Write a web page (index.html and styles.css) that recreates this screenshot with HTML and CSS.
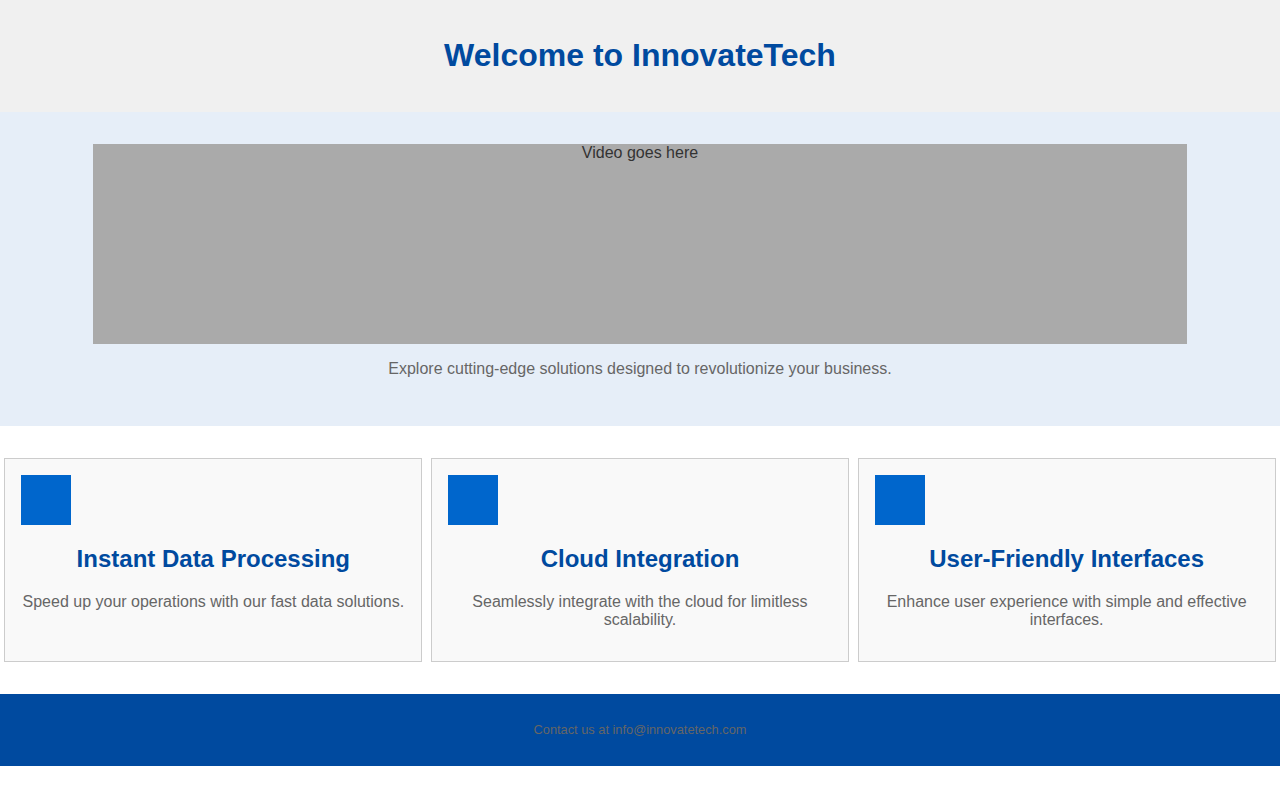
FILE: index.html
```html
<!DOCTYPE html>
<html lang="en">
<head>
<meta charset="utf-8">
<title>InnovateTech</title>
<link rel="stylesheet" href="styles.css">
</head>
<body>
<header class="site-header">
  <h1 class="site-title">Welcome to InnovateTech</h1>
</header>
<section class="hero">
  <div class="video-box">Video goes here</div>
  <p class="hero-text">Explore cutting-edge solutions designed to revolutionize your business.</p>
</section>
<section class="features">
  <div class="card">
    <div class="card-icon"></div>
    <h2 class="card-title">Instant Data Processing</h2>
    <p class="card-text">Speed up your operations with our fast data solutions.</p>
  </div>
  <div class="card">
    <div class="card-icon"></div>
    <h2 class="card-title">Cloud Integration</h2>
    <p class="card-text">Seamlessly integrate with the cloud for limitless scalability.</p>
  </div>
  <div class="card">
    <div class="card-icon"></div>
    <h2 class="card-title">User-Friendly Interfaces</h2>
    <p class="card-text">Enhance user experience with simple and effective interfaces.</p>
  </div>
</section>
<footer class="site-footer">
  <p class="footer-text">Contact us at info@innovatetech.com</p>
</footer>
</body>
</html>
```

FILE: styles.css
```css
body {
  margin: 0;
  font-family: "Liberation Sans", Arial, sans-serif;
  background: #ffffff;
}

.site-header {
  background: #f0f0f0;
  padding: 16px;
  text-align: center;
}

.site-title {
  margin: 21.44px 0;
  font-size: 32px;
  color: #004a9f;
}

.hero {
  background: #e6eef8;
  padding: 32px;
  text-align: center;
}

.video-box {
  width: 90%;
  height: 200px;
  margin: 0 auto;
  background: #aaaaaa;
  color: #333333;
  font-size: 16px;
}

.hero-text {
  margin: 16px 0;
  font-size: 16px;
  color: #666666;
}

.features {
  display: flex;
  justify-content: space-around;
  padding: 32px 0;
}

.card {
  width: 30%;
  padding: 16px;
  background: #f9f9f9;
  border: 1px solid #cccccc;
  text-align: center;
}

.card-icon {
  width: 50px;
  height: 50px;
  background: #0066cc;
}

.card-title {
  margin: 19.92px 0;
  font-size: 24px;
  color: #004a9f;
}

.card-text {
  margin: 16px 0;
  font-size: 16px;
  color: #666666;
}

.site-footer {
  background: #004a9f;
  padding: 16px;
  text-align: center;
}

.footer-text {
  margin: 12.8px 0;
  font-size: 12.8px;
  color: #666666;
}
```
